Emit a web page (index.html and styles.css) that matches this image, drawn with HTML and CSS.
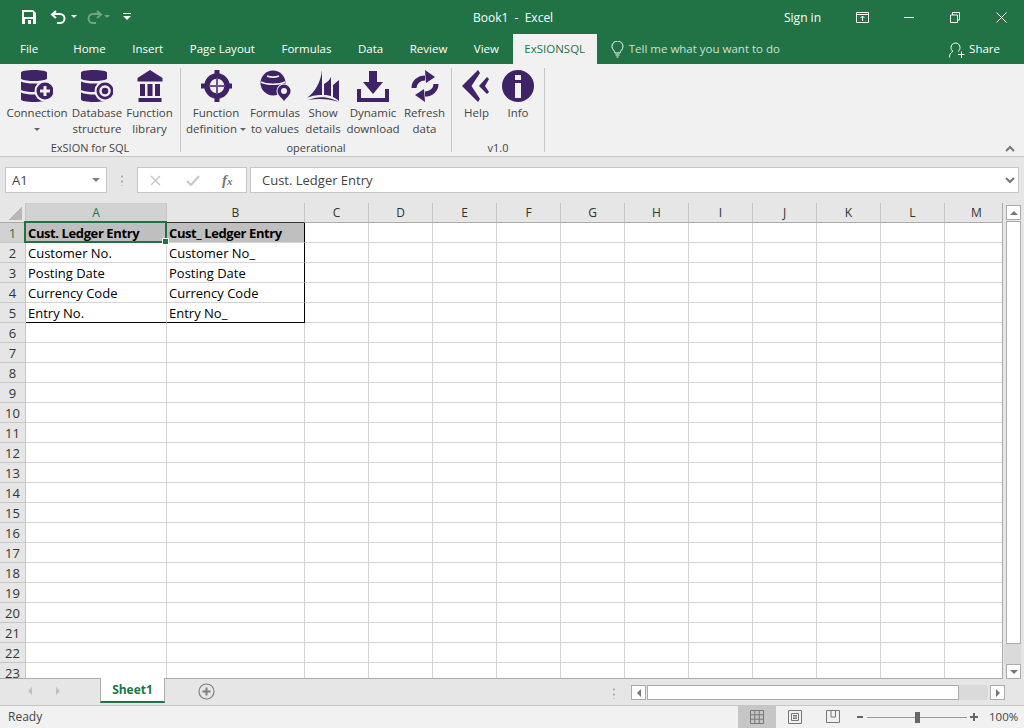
FILE: index.html
```html
<!DOCTYPE html>
<html lang="en">

<head>
    <meta charset="UTF-8">
    <title>Book1 - Excel</title>
    <link rel="stylesheet" href="styles.css">
</head>

<body>

    <!-- Title bar -->
    <div class="titlebar">
        <div class="qat">
            <svg width="112" height="16" viewBox="0 0 112 16">
                <path d="M0 1h11l3 3v11H0z" fill="#fff"/>
                <rect x="2" y="3" width="9" height="5" fill="#217346"/>
                <rect x="3" y="10" width="8" height="5" fill="#217346"/>
                <rect x="6" y="11" width="3" height="4" fill="#fff"/>
                <path d="M31 5h7a4.5 4.5 0 0 1 0 9h-3M34 2l-4 3.500 4 3.500" fill="none" stroke="#fff" stroke-width="2"/>
                <path d="M49 6h6l-3 3z" fill="#fff"/>
                <g opacity=".35">
                    <path d="M78 5h-7a4.500 4.500 0 0 0 0 9h3M75 2l4 3.500-4 3.500" fill="none" stroke="#fff" stroke-width="2"/>
                    <path d="M82 6h6l-3 3z" fill="#fff"/>
                </g>
                <path d="M101 4h8v1h-8zM101 7h8l-4 4z" fill="#fff"/>
            </svg>
        </div>
        <div class="doc-title">Book1 &nbsp;-&nbsp; Excel</div>
        <div class="sign-in">Sign in</div>
        <svg class="win-display" width="13" height="11" viewBox="0 0 13 11"><path d="M.5.500h12v10H.5zM0 2.500h13M6.500 9V4M4.500 6l2-2 2 2" fill="none" stroke="#fff"/></svg>
        <svg class="win-min" width="10" height="11" viewBox="0 0 10 11"><path d="M0 5.500h10" stroke="#fff"/></svg>
        <svg class="win-restore" width="10" height="11" viewBox="0 0 10 11"><path d="M.5 3h7v7.500h-7zM2.500 3V.5h7v7.500H7.500" fill="none" stroke="#fff"/></svg>
        <svg class="win-close" width="11" height="11" viewBox="0 0 11 11"><path d="M.5.500l10 10M10.500.5l-10 10" stroke="#fff"/></svg>
    </div>

    <!-- Ribbon tabs -->
    <div class="tabs">
        <div class="tab tab-file">File</div>
        <div class="tab">Home</div>
        <div class="tab">Insert</div>
        <div class="tab">Page Layout</div>
        <div class="tab">Formulas</div>
        <div class="tab">Data</div>
        <div class="tab">Review</div>
        <div class="tab">View</div>
        <div class="tab tab-active">ExSIONSQL</div>
        <div class="tell-me">
            <svg width="13" height="17" viewBox="0 0 13 17"><path d="M4 12c0-2-3-3.500-3-6.500a5.500 5.500 0 0 1 11 0C12 8.500 9 10 9 12zM4.500 14h4M5.500 16h2" fill="none" stroke="#fff"/></svg>
            <span>Tell me what you want to do</span>
        </div>
        <div class="share">
            <svg width="16" height="17" viewBox="0 0 16 17"><path d="M.5 16.500c0-4 2-5.500 3.500-6-1.500-1-2-2.500-2-4a4.500 4.500 0 0 1 9 0c0 1.500-.5 3-2 4M9 13.500h6.500M12.500 10.500v6.500" fill="none" stroke="#fff"/></svg>
            <span>Share</span>
        </div>
    </div>

    <!-- Ribbon -->
    <div class="ribbon">
        <div class="group group-sql">
            <div class="group-buttons">
                <div class="rbtn w62">
                    <svg class="icon" width="32" height="32" viewBox="0 0 32 32">
                        <path d="M0 2.500C0 1 6 0 13 0s13 1 13 2.500V9c-3 1.500-8 2-13 2S3 10.500 0 9zM0 11.500c3 1.500 8 2 13 2s10-.5 13-2V20c-3 1.500-8 2-13 2s-10-.5-13-2zM0 22.500c3 1.500 8 2 13 2s10-.5 13-2v7c0 1.500-6 2.500-13 2.500S0 31 0 29.500z" fill="#3f2366"/>
                        <circle cx="24" cy="21" r="10.500" fill="#f1f1f1"/>
                        <circle cx="24" cy="21" r="8.500" fill="#3f2366"/>
                        <path d="M22.500 16h3v3.500H29v3h-3.500V26h-3v-3.500H19v-3h3.500z" fill="#f1f1f1"/>
                    </svg>
                    <div class="label">Connection</div>
                    <div class="caret-row"><i class="caret"></i></div>
                </div>
                <div class="rbtn w58">
                    <svg class="icon" width="32" height="32" viewBox="0 0 32 32">
                        <path d="M0 2.500C0 1 6 0 13 0s13 1 13 2.500V9c-3 1.500-8 2-13 2S3 10.500 0 9zM0 11.500c3 1.500 8 2 13 2s10-.5 13-2V20c-3 1.500-8 2-13 2s-10-.5-13-2zM0 22.500c3 1.500 8 2 13 2s10-.5 13-2v7c0 1.500-6 2.500-13 2.500S0 31 0 29.500z" fill="#3f2366"/>
                        <circle cx="24" cy="21" r="10.500" fill="#f1f1f1"/>
                        <circle cx="24" cy="21" r="8.500" fill="#3f2366"/>
                        <circle cx="24" cy="21" r="4.500" fill="none" stroke="#f1f1f1" stroke-width="2.500"/>
                    </svg>
                    <div class="label">Database<br>structure</div>
                </div>
                <div class="rbtn w47">
                    <svg class="icon" width="32" height="32" viewBox="0 0 32 32">
                        <path d="M16 0l12.500 8v3.500h-25V8zM6 14h5v12H6zM13.500 14h5v12h-5zM21 14h5v12h-5zM4.500 28h23v4h-23z" fill="#3f2366"/>
                    </svg>
                    <div class="label">Function<br>library</div>
                </div>
            </div>
            <div class="group-name">ExSION for SQL</div>
        </div>

        <div class="group group-op">
            <div class="group-buttons">
                <div class="rbtn w62">
                    <svg class="icon" width="32" height="32" viewBox="0 0 32 32">
                        <circle cx="17" cy="16" r="10" fill="none" stroke="#3f2366" stroke-width="5.500"/>
                        <path d="M14.500 0h5v8h-5zM14.500 24h5v8h-5zM1 13.500h8v5H1zM25 13.500h8v5h-8z" fill="#3f2366"/>
                        <path d="M17 8v16M9 16h16" stroke="#6a5488" stroke-width="2"/>
                    </svg>
                    <div class="label">Function<br>definition<i class="caret caret-inline"></i></div>
                </div>
                <div class="rbtn w56">
                    <svg class="icon" width="32" height="32" viewBox="0 0 32 32">
                        <circle cx="14" cy="13" r="12.500" fill="#3f2366"/>
                        <path d="M2 12c6 3 18 3 24 0M8 6c4 1.500 8 1.500 12 0" fill="none" stroke="#f1f1f1" stroke-width="1.500"/>
                        <path d="M25 32c-3-4-7.500-6-7.500-11a7.500 7.500 0 0 1 15 0c0 5-4.500 7-7.500 11z" fill="#f1f1f1"/>
                        <path d="M25 31c-3-4-6.500-6-6.500-10a6.500 6.500 0 0 1 13 0c0 4-3.500 6-6.500 10z" fill="#3f2366"/>
                        <circle cx="25" cy="21" r="3" fill="#f1f1f1"/>
                    </svg>
                    <div class="label">Formulas<br>to values</div>
                </div>
                <div class="rbtn w40">
                    <svg class="icon" width="32" height="32" viewBox="0 0 32 32">
                        <path d="M0 28C8 22 14 12 15 0v25C8 25 4 26 0 28zM17 25V14c3-2 6-4 7-7v19c-2-.5-5-1-7-1zM26 27V15l6-5v21c-2-2-4-3-6-4z" fill="#3f2366"/>
                        <path d="M1 30c7-3 16-4 24-1 3 1 5 2 7 3-9-3-20-4-31-2z" fill="#3f2366"/>
                    </svg>
                    <div class="label">Show<br>details</div>
                </div>
                <div class="rbtn w60">
                    <svg class="icon" width="32" height="32" viewBox="0 0 32 32">
                        <path d="M12 1h8v11h6L16 24 6 12h6zM0 19h4v9h24v-9h4v13H0z" fill="#3f2366"/>
                    </svg>
                    <div class="label">Dynamic<br>download</div>
                </div>
                <div class="rbtn w43">
                    <svg class="icon" width="32" height="32" viewBox="0 0 32 32">
                        <path d="M5 18c0-6 5-10 11-10M27 14c0 6-5 10-11 10" fill="none" stroke="#3f2366" stroke-width="5"/>
                        <path d="M16 0l10 7-9 6zM16 32L6 25l9-6z" fill="#3f2366"/>
                    </svg>
                    <div class="label">Refresh<br>data</div>
                </div>
            </div>
            <div class="group-name">operational</div>
        </div>

        <div class="group group-ver">
            <div class="group-buttons">
                <div class="rbtn w41">
                    <svg class="icon" width="32" height="32" viewBox="0 0 32 32">
                        <path d="M17 0L1 16l16 16 2-3-8.500-13L19 3zM26 7l-8 9 8 8 2-2-4-6 4-7z" fill="#3f2366"/>
                    </svg>
                    <div class="label">Help</div>
                </div>
                <div class="rbtn w42">
                    <svg class="icon" width="32" height="32" viewBox="0 0 32 32">
                        <circle cx="16" cy="16" r="16" fill="#3f2366"/>
                        <path d="M13 5h6v5h-6zM13 13h6v15h-6z" fill="#f1f1f1"/>
                    </svg>
                    <div class="label">Info</div>
                </div>
            </div>
            <div class="group-name">v1.0</div>
        </div>

        <svg class="collapse" width="10" height="7" viewBox="0 0 10 7"><path d="M1 6l4-4 4 4" fill="none" stroke="#777" stroke-width="2"/></svg>
    </div>

    <!-- Formula bar -->
    <div class="formula-row">
        <div class="name-box">
            <span>A1</span>
            <i class="caret caret-big"></i>
        </div>
        <div class="grip"></div>
        <div class="fx-box">
            <svg width="11" height="11" viewBox="0 0 11 11"><path d="M1 1l9 9M10 1l-9 9" stroke="#c8c8c8" stroke-width="1.500"/></svg>
            <svg class="fx-check" width="14" height="11" viewBox="0 0 14 11"><path d="M1 6l4 4 8-9" fill="none" stroke="#c8c8c8" stroke-width="2"/></svg>
            <span class="fx">f<small>x</small></span>
        </div>
        <div class="formula-input">
            <span>Cust. Ledger Entry</span>
            <svg width="10" height="7" viewBox="0 0 10 7"><path d="M1 1l4 4 4-4" fill="none" stroke="#777" stroke-width="2"/></svg>
        </div>
    </div>

    <!-- Sheet -->
    <div class="sheet-row">
        <div class="sheet">
            <table class="cells">
                <colgroup>
                    <col class="col-head"><col class="col-a"><col class="col-b">
                    <col class="col-n"><col class="col-n"><col class="col-n"><col class="col-n"><col class="col-n"><col class="col-n"><col class="col-n"><col class="col-n"><col class="col-n"><col class="col-n"><col class="col-n">
                </colgroup>
                <tr class="head-row">
                    <th class="corner"><span></span></th>
                    <th class="on">A</th><th class="tbl-top">B</th><th>C</th><th>D</th><th>E</th><th>F</th><th>G</th><th>H</th><th>I</th><th>J</th><th>K</th><th>L</th><th>M</th>
                </tr>
                <tr><th class="on">1</th><td class="tbl-head selected">Cust. Ledger Entry<span class="sel-box"><i></i></span></td><td class="tbl-head tbl-right">Cust_ Ledger Entry</td><td></td><td></td><td></td><td></td><td></td><td></td><td></td><td></td><td></td><td></td><td></td></tr>
                <tr><th>2</th><td>Customer No.</td><td class="tbl-right">Customer No_</td><td></td><td></td><td></td><td></td><td></td><td></td><td></td><td></td><td></td><td></td><td></td></tr>
                <tr><th>3</th><td>Posting Date</td><td class="tbl-right">Posting Date</td><td></td><td></td><td></td><td></td><td></td><td></td><td></td><td></td><td></td><td></td><td></td></tr>
                <tr><th>4</th><td>Currency Code</td><td class="tbl-right">Currency Code</td><td></td><td></td><td></td><td></td><td></td><td></td><td></td><td></td><td></td><td></td><td></td></tr>
                <tr><th>5</th><td class="tbl-bottom">Entry No.</td><td class="tbl-bottom tbl-right">Entry No_</td><td></td><td></td><td></td><td></td><td></td><td></td><td></td><td></td><td></td><td></td><td></td></tr>
                <tr><th>6</th><td></td><td></td><td></td><td></td><td></td><td></td><td></td><td></td><td></td><td></td><td></td><td></td><td></td></tr>
                <tr><th>7</th><td></td><td></td><td></td><td></td><td></td><td></td><td></td><td></td><td></td><td></td><td></td><td></td><td></td></tr>
                <tr><th>8</th><td></td><td></td><td></td><td></td><td></td><td></td><td></td><td></td><td></td><td></td><td></td><td></td><td></td></tr>
                <tr><th>9</th><td></td><td></td><td></td><td></td><td></td><td></td><td></td><td></td><td></td><td></td><td></td><td></td><td></td></tr>
                <tr><th>10</th><td></td><td></td><td></td><td></td><td></td><td></td><td></td><td></td><td></td><td></td><td></td><td></td><td></td></tr>
                <tr><th>11</th><td></td><td></td><td></td><td></td><td></td><td></td><td></td><td></td><td></td><td></td><td></td><td></td><td></td></tr>
                <tr><th>12</th><td></td><td></td><td></td><td></td><td></td><td></td><td></td><td></td><td></td><td></td><td></td><td></td><td></td></tr>
                <tr><th>13</th><td></td><td></td><td></td><td></td><td></td><td></td><td></td><td></td><td></td><td></td><td></td><td></td><td></td></tr>
                <tr><th>14</th><td></td><td></td><td></td><td></td><td></td><td></td><td></td><td></td><td></td><td></td><td></td><td></td><td></td></tr>
                <tr><th>15</th><td></td><td></td><td></td><td></td><td></td><td></td><td></td><td></td><td></td><td></td><td></td><td></td><td></td></tr>
                <tr><th>16</th><td></td><td></td><td></td><td></td><td></td><td></td><td></td><td></td><td></td><td></td><td></td><td></td><td></td></tr>
                <tr><th>17</th><td></td><td></td><td></td><td></td><td></td><td></td><td></td><td></td><td></td><td></td><td></td><td></td><td></td></tr>
                <tr><th>18</th><td></td><td></td><td></td><td></td><td></td><td></td><td></td><td></td><td></td><td></td><td></td><td></td><td></td></tr>
                <tr><th>19</th><td></td><td></td><td></td><td></td><td></td><td></td><td></td><td></td><td></td><td></td><td></td><td></td><td></td></tr>
                <tr><th>20</th><td></td><td></td><td></td><td></td><td></td><td></td><td></td><td></td><td></td><td></td><td></td><td></td><td></td></tr>
                <tr><th>21</th><td></td><td></td><td></td><td></td><td></td><td></td><td></td><td></td><td></td><td></td><td></td><td></td><td></td></tr>
                <tr><th>22</th><td></td><td></td><td></td><td></td><td></td><td></td><td></td><td></td><td></td><td></td><td></td><td></td><td></td></tr>
                <tr><th>23</th><td></td><td></td><td></td><td></td><td></td><td></td><td></td><td></td><td></td><td></td><td></td><td></td><td></td></tr>
            </table>
        </div>
        <div class="vscroll">
            <div class="sbtn"><i class="tri tri-up"></i></div>
            <div class="vthumb"></div>
            <div class="vtrack"></div>
            <div class="sbtn"><i class="tri tri-down"></i></div>
        </div>
    </div>

    <!-- Sheet tabs and horizontal scrollbar -->
    <div class="sheet-tabs">
        <i class="tri tri-left tri-pale nav-prev"></i>
        <i class="tri tri-right tri-pale nav-next"></i>
        <div class="sheet-tab">Sheet1</div>
        <svg class="add-sheet" width="17" height="17" viewBox="0 0 17 17">
            <circle cx="8.500" cy="8.500" r="7.500" fill="none" stroke="#808080" stroke-width="1.200"/>
            <path d="M8.500 4.500v8M4.500 8.500h8" stroke="#808080" stroke-width="2"/>
        </svg>
        <div class="grip grip-tabs"></div>
        <div class="hscroll">
            <div class="sbtn"><i class="tri tri-left"></i></div>
            <div class="hthumb"></div>
            <div class="htrack"></div>
            <div class="sbtn sbtn-end"><i class="tri tri-right"></i></div>
        </div>
    </div>

    <!-- Status bar -->
    <div class="statusbar">
        <div class="ready">Ready</div>
        <div class="view-btn view-active">
            <svg width="14" height="14" viewBox="0 0 14 14"><path d="M.5.500h13v13H.5zM.5 4.800h13M.5 9.200h13M4.800.5v13M9.200.5v13" fill="none" stroke="#777"/></svg>
        </div>
        <div class="view-btn">
            <svg width="14" height="14" viewBox="0 0 14 14"><path d="M.5.500h13v13H.5zM3.500 3.500h7v7h-7zM5 5.500h4M5 7h4M5 8.500h4" fill="none" stroke="#777"/></svg>
        </div>
        <div class="view-btn">
            <svg width="14" height="14" viewBox="0 0 14 14"><path d="M.5.500h13v12H.5zM5 .5v6.500h4.500V.5" fill="none" stroke="#777"/></svg>
        </div>
        <div class="zoom-minus"></div>
        <div class="slider"><div class="knob"></div></div>
        <div class="zoom-plus"></div>
        <div class="zoom-pct">100%</div>
    </div>

</body>

</html>
```

FILE: styles.css
```css
/* General */
body {
    margin: 0;
    width: 1024px;
    height: 728px;
    overflow: hidden;
    display: flex;
    flex-direction: column;
    font-family: "Open Sans", sans-serif;
    font-size: 12px;
    color: #444;
    background-color: #e6e6e6;
}

svg {
    display: block;
    flex: none;
}

/* Title bar */
.titlebar {
    height: 34px;
    flex: none;
    display: flex;
    align-items: center;
    background-color: #217346;
    color: #fff;
}

.qat {
    width: 451px;
    padding-left: 22px;
}

.doc-title {
    width: 311px;
}

.sign-in {
    width: 72px;
}

.win-min {
    margin-left: 35px;
}

.win-restore {
    margin-left: 36px;
}

.win-close {
    margin-left: 36px;
}

/* Ribbon tabs */
.tabs {
    height: 30px;
    flex: none;
    display: flex;
    background-color: #217346;
    color: #fff;
    line-height: 30px;
    font-size: 11.5px;
}

.tab {
    padding: 0 13.25px;
}

.tab-file {
    padding-left: 20px;
    padding-right: 21.75px;
}

.tab-active {
    width: 84px;
    box-sizing: border-box;
    margin-left: 0.5px;
    padding: 0;
    text-align: center;
    background-color: #f1f1f1;
    color: #217346;
}

.tell-me {
    display: flex;
    align-items: center;
    gap: 5px;
    margin-left: 14px;
    color: #cfe0d6;
}

.share {
    display: flex;
    align-items: center;
    gap: 4px;
    margin-left: auto;
    margin-right: 24px;
}

/* Ribbon */
.ribbon {
    height: 93px;
    flex: none;
    box-sizing: border-box;
    display: flex;
    padding-top: 4px;
    background-color: #f1f1f1;
    border-bottom: 1px solid #c6c6c6;
    font-size: 11.5px;
}

.group {
    height: 84px;
    border-right: 1px solid #c6c6c6;
    display: flex;
    flex-direction: column;
    box-sizing: border-box;
}

.group-sql {
    width: 181px;
    padding-left: 6px;
}

.group-op {
    width: 271px;
    padding-left: 4px;
}

.group-ver {
    width: 93px;
    padding-left: 4px;
}

.group-buttons {
    display: flex;
    height: 75px;
    flex: none;
}

.group-name {
    height: 9px;
    line-height: 9px;
    font-size: 11px;
    text-align: center;
}

.group-sql .group-name {
    margin-left: -6px;
}

.group-op .group-name {
    margin-left: -4px;
}

.group-ver .group-name {
    margin-left: -4px;
}

.rbtn {
    padding-top: 2px;
    text-align: center;
    white-space: nowrap;
}

.icon {
    margin: 0 auto 3px;
}

.label {
    line-height: 16px;
}

.w40 { width: 40px; }
.w41 { width: 41px; }
.w42 { width: 42px; }
.w43 { width: 43px; }
.w47 { width: 47px; }
.w56 { width: 56px; }
.w58 { width: 58px; }
.w60 { width: 60px; }
.w62 { width: 62px; }

.caret-row {
    line-height: 16px;
}

.caret {
    display: inline-block;
    border-top: 3px solid #666;
    border-left: 3px solid transparent;
    border-right: 3px solid transparent;
    vertical-align: middle;
}

.caret-inline {
    margin-left: 3px;
}

.caret-big {
    border-top-width: 4px;
    border-left-width: 4px;
    border-right-width: 4px;
    border-top-color: #808080;
}

.collapse {
    margin-left: auto;
    margin-right: 9px;
    align-self: flex-end;
    margin-bottom: 4px;
}

/* Formula bar */
.formula-row {
    height: 46px;
    flex: none;
    box-sizing: border-box;
    padding-top: 10px;
    padding-left: 5px;
    display: flex;
    align-items: flex-start;
}

.name-box {
    width: 102px;
    height: 26px;
    box-sizing: border-box;
    padding: 0 6px;
    display: flex;
    align-items: center;
    justify-content: space-between;
    background-color: #fff;
    border: 1px solid #c6c6c6;
    font-size: 13px;
}

.grip {
    width: 2px;
    height: 12px;
    margin: 7px 14px 0;
    background-image: radial-gradient(circle, #a8a8a8 1px, transparent 1.200px);
    background-size: 2px 5px;
}

.fx-box {
    width: 110px;
    height: 26px;
    box-sizing: border-box;
    padding-left: 12px;
    display: flex;
    align-items: center;
    background-color: #fff;
    border: 1px solid #c6c6c6;
}

.fx-check {
    margin-left: 25px;
}

.fx {
    margin-left: 22px;
    font-family: "Liberation Serif", serif;
    font-style: italic;
    font-weight: bold;
    font-size: 15px;
    color: #777;
}

.fx small {
    font-size: 11px;
}

.formula-input {
    width: 769px;
    height: 26px;
    box-sizing: border-box;
    margin-left: 3px;
    padding: 0 3px 0 11px;
    display: flex;
    align-items: center;
    justify-content: space-between;
    background-color: #fff;
    border: 1px solid #c6c6c6;
    font-size: 13px;
}

/* Sheet */
.sheet-row {
    height: 476px;
    flex: none;
    display: flex;
}

.sheet {
    width: 1003px;
    box-sizing: border-box;
    overflow: hidden;
    background-color: #fff;
    border-right: 1px solid #ababab;
    border-bottom: 1px solid #ababab;
}

.cells {
    width: 1009px;
    table-layout: fixed;
    border-collapse: separate;
    border-spacing: 0;
    color: #000;
}

.col-head { width: 26px; }
.col-a { width: 141px; }
.col-b { width: 138px; }
.col-n { width: 64px; }

.cells tr {
    height: 20px;
}

.cells th {
    box-sizing: border-box;
    height: 20px;
    padding: 1px 0 0;
    font-weight: normal;
    text-align: center;
    font-size: 13px;
    color: #333;
    background-color: #e6e6e6;
    border-right: 1px solid #c6c6c6;
    border-bottom: 1px solid #c6c6c6;
}

.cells .head-row th {
    padding-top: 0;
    font-size: 12px;
    border-bottom-color: #ababab;
}

.cells .head-row .tbl-top {
    border-bottom-color: #333;
}

.cells th.on {
    color: #217346;
    background-color: #d2d2d2;
}

.corner span {
    display: block;
    width: 13px;
    height: 13px;
    margin: 2px 3px 0 auto;
    background: linear-gradient(135deg, transparent 50%, #b8b8b8 50%);
}

.cells td {
    box-sizing: border-box;
    height: 20px;
    padding: 0 2px;
    white-space: nowrap;
    font-size: 13px;
    border-right: 1px solid #d4d4d4;
    border-bottom: 1px solid #d4d4d4;
}

.cells .tbl-head {
    font-weight: bold;
    letter-spacing: -0.4px;
    background-color: #bfbfbf;
}

.cells .tbl-right {
    border-right-color: #000;
}

.cells .tbl-bottom {
    border-bottom-color: #000;
}

.selected {
    position: relative;
}

.sel-box {
    position: absolute;
    left: -2px;
    top: -2px;
    width: 143px;
    height: 22px;
    box-sizing: border-box;
    border: 2px solid #217346;
}

.sel-box i {
    position: absolute;
    right: -4px;
    bottom: -4px;
    width: 5px;
    height: 5px;
    background-color: #217346;
    border: 1px solid #fff;
}

/* Scrollbars */
.vscroll {
    width: 21px;
    box-sizing: border-box;
    padding: 2px 3px 0;
    display: flex;
    flex-direction: column;
}

.sbtn {
    width: 15px;
    height: 15px;
    flex: none;
    box-sizing: border-box;
    display: flex;
    align-items: center;
    justify-content: center;
    background-color: #fff;
    border: 1px solid #ababab;
}

.vthumb {
    height: 423px;
    flex: none;
    box-sizing: border-box;
    margin-top: 1px;
    background-color: #fff;
    border: 1px solid #ababab;
}

.vtrack {
    flex: 1;
    margin-left: -2px;
    background-color: #dadada;
}

.tri {
    display: block;
    width: 0;
    height: 0;
    flex: none;
    border: 4px solid transparent;
}

.tri-up {
    border-top: 0;
    border-bottom-color: #777;
}

.tri-down {
    border-bottom: 0;
    border-top-color: #777;
}

.tri-left {
    border-left: 0;
    border-right-color: #777;
}

.tri-right {
    border-right: 0;
    border-left-color: #777;
}

.tri-pale.tri-left {
    border-right-color: #c0c0c0;
}

.tri-pale.tri-right {
    border-left-color: #c0c0c0;
}

/* Sheet tabs */
.sheet-tabs {
    height: 27px;
    flex: none;
    box-sizing: border-box;
    display: flex;
    align-items: flex-start;
    border-bottom: 1px solid #c6c6c6;
}

.nav-prev {
    margin: 8px 0 0 28px;
}

.nav-next {
    margin: 8px 0 0 24px;
}

.sheet-tab {
    width: 65px;
    height: 25px;
    box-sizing: border-box;
    margin: -1px 0 0 40px;
    line-height: 24px;
    text-align: center;
    font-weight: bold;
    color: #217346;
    background-color: #fff;
    border-left: 1px solid #ababab;
    border-right: 1px solid #ababab;
    border-bottom: 2px solid #217346;
    position: relative;
}

.add-sheet {
    margin: 4px 0 0 33px;
}

.grip-tabs {
    margin: 8px 0 0 398px;
}

.hscroll {
    display: flex;
    margin: 6px 0 0 16px;
}

.hthumb {
    width: 312px;
    height: 15px;
    box-sizing: border-box;
    margin-left: 1px;
    background-color: #fff;
    border: 1px solid #ababab;
}

.htrack {
    width: 29px;
    height: 15px;
    background-color: #dadada;
}

.sbtn-end {
    margin-left: 2px;
}

/* Status bar */
.statusbar {
    flex: 1;
    display: flex;
    align-items: center;
    background-color: #f1f1f1;
    color: #444;
}

.ready {
    width: 730px;
    padding: 0 0 2px 8px;
}

.view-btn {
    width: 38px;
    align-self: stretch;
    display: flex;
    align-items: center;
    justify-content: center;
}

.view-active {
    background-color: #c6c6c6;
}

.zoom-minus {
    width: 6px;
    height: 2px;
    margin-left: 5px;
    background-color: #666;
}

.slider {
    width: 100px;
    height: 1px;
    margin-left: 4px;
    background-color: #999;
    position: relative;
}

.knob {
    position: absolute;
    left: 48px;
    top: -5px;
    width: 5px;
    height: 11px;
    background-color: #666;
}

.zoom-plus {
    width: 8px;
    height: 8px;
    margin-left: 3px;
    background:
        linear-gradient(#666, #666) center / 8px 2px no-repeat,
        linear-gradient(#666, #666) center / 2px 8px no-repeat;
}

.zoom-pct {
    margin-left: 11px;
    padding-bottom: 2px;
    font-size: 11.5px;
}
```
